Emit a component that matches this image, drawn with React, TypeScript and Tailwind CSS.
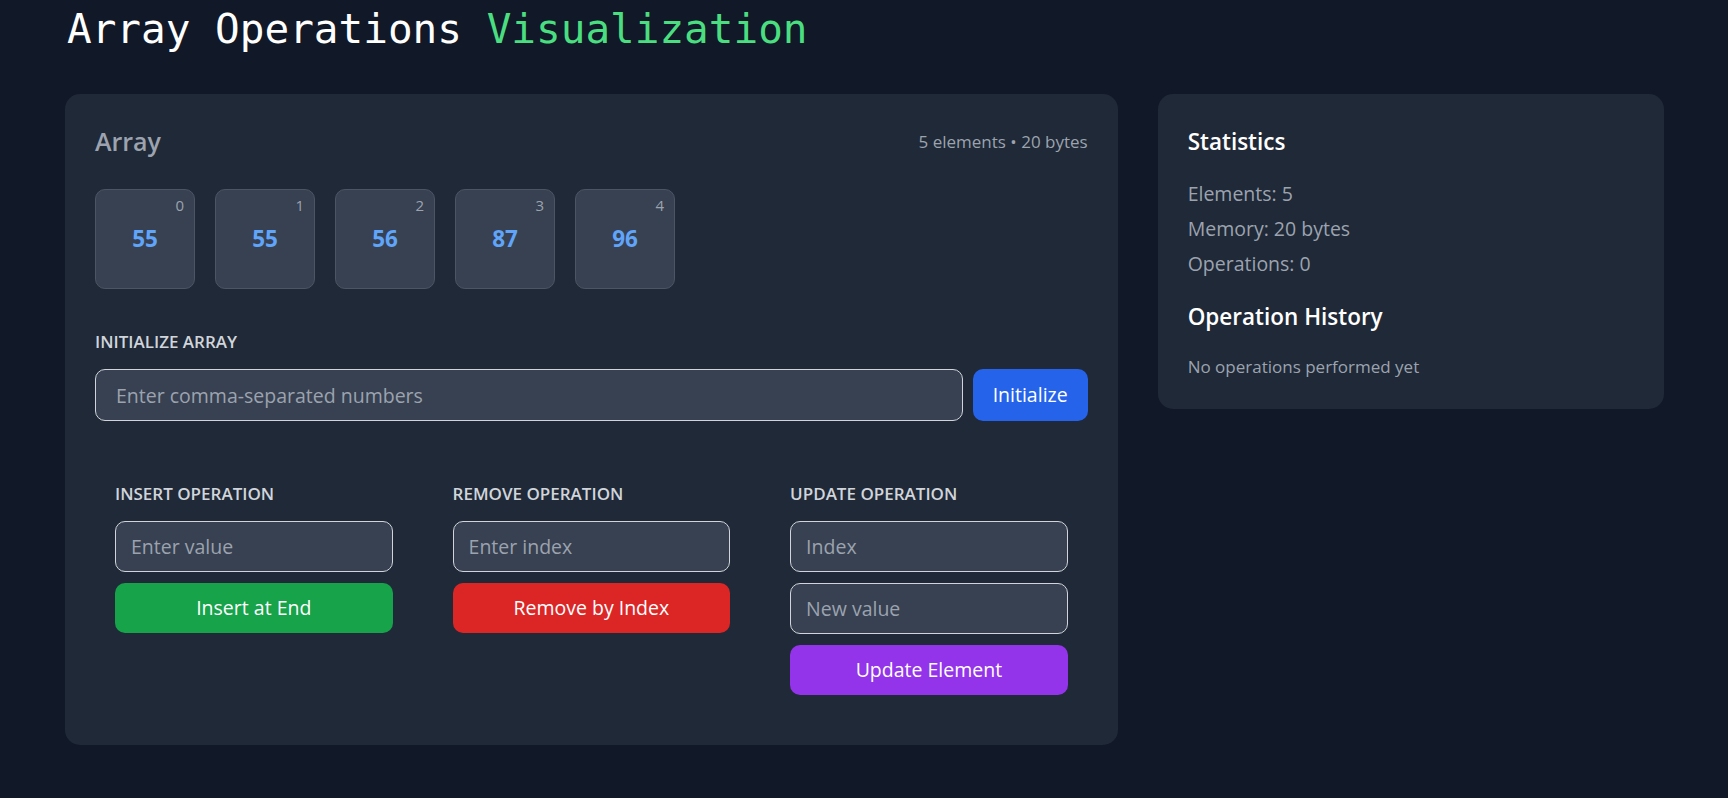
import { useState } from "react";

const sans = "font-['Open_Sans','Noto_Sans',sans-serif]";

type OpProps = {
    title: string;
    fields: string[];
    action: string;
    color: string;
};

const OperationBox = ({ title, fields, action, color }: OpProps) => {
    return (
        <div>
            <h3 className="text-[17px] leading-[25px] font-semibold uppercase text-[#d1d5db] mb-[15px]">{title}</h3>
            <div className="flex flex-col gap-[11px]">
                {fields.map((f) => (
                    <input
                        key={f}
                        placeholder={f}
                        className="h-[51px] w-full rounded-[10px] border border-[#d1d5db] bg-[#374151] px-[15px] text-[19.5px] text-white placeholder:text-[#9ca3af] outline-none"
                    />
                ))}
                <button className={`h-[50px] w-full rounded-[10px] text-[19.5px] text-white ${color}`}>{action}</button>
            </div>
        </div>
    );
};

export default function App() {
    const [arr] = useState<number[]>([55, 55, 56, 87, 96]);
    const [history] = useState<string[]>([]);

    return (
        <div className={`min-h-screen bg-[#111827] ${sans}`}>
            <div className="mx-auto max-w-[1600px] pt-[5px] pb-[40px] pl-[1px]">
                <h1 className="font-['DejaVu_Sans_Mono',monospace] text-[41px] leading-[48px] text-white mb-[41px] pl-[2px]">
                    Array Operations <span className="text-[#4ade80]">Visualization</span>
                </h1>

                <div className="grid grid-cols-3 items-start gap-[40px]">
                    <div className="col-span-2 rounded-[15px] bg-[#1f2937] p-[30px]">
                        <div className="flex items-center justify-between mb-[30px]">
                            <h2 className="text-[25px] leading-[35px] font-semibold text-[#9ca3af]">Array</h2>
                            <span className="text-[17px] leading-[25px] text-[#9ca3af]">
                                {arr.length} elements • {arr.length * 4} bytes
                            </span>
                        </div>

                        <div className="flex gap-[20px] mb-[40px]">
                            {arr.map((v, i) => (
                                <div
                                    key={i}
                                    className="relative flex h-[100px] w-[100px] items-center justify-center rounded-[10px] border border-[#4b5563] bg-[#374151]"
                                >
                                    <span className="absolute top-[5px] right-[10px] text-[15px] leading-[20px] text-[#9ca3af]">{i}</span>
                                    <span className="text-[22.5px] font-bold text-[#60a5fa]">{v}</span>
                                </div>
                            ))}
                        </div>

                        <h3 className="text-[17px] leading-[25px] font-semibold uppercase text-[#d1d5db] mb-[15px]">Initialize Array</h3>
                        <div className="flex gap-[10px]">
                            <input
                                placeholder="Enter comma-separated numbers"
                                className="h-[52px] flex-1 rounded-[10px] border border-[#d1d5db] bg-[#374151] px-[20px] text-[19.5px] text-white placeholder:text-[#9ca3af] outline-none"
                            />
                            <button className="h-[52px] rounded-[10px] bg-[#2563eb] px-[20px] text-[19.5px] text-white">Initialize</button>
                        </div>

                        <div className="mt-[40px] grid grid-cols-3 gap-[60px] p-[20px]">
                            <OperationBox title="Insert Operation" fields={["Enter value"]} action="Insert at End" color="bg-[#16a34a]" />
                            <OperationBox title="Remove Operation" fields={["Enter index"]} action="Remove by Index" color="bg-[#dc2626]" />
                            <OperationBox title="Update Operation" fields={["Index", "New value"]} action="Update Element" color="bg-[#9333ea]" />
                        </div>
                    </div>

                    <div className="rounded-[15px] bg-[#1f2937] p-[30px]">
                        <h2 className="text-[22.5px] leading-[35px] font-semibold text-white mb-[20px]">Statistics</h2>
                        <div className="flex flex-col gap-[5px] text-[19.5px] leading-[30px] text-[#9ca3af]">
                            <p>Elements: {arr.length}</p>
                            <p>Memory: {arr.length * 4} bytes</p>
                            <p>Operations: {history.length}</p>
                        </div>
                        <h2 className="text-[22.5px] leading-[35px] font-semibold text-white mt-[20px] mb-[20px]">Operation History</h2>
                        {history.length === 0 ? (
                            <p className="text-[17px] leading-[25px] text-[#9ca3af]">No operations performed yet</p>
                        ) : (
                            history.map((h, i) => <p key={i}>{h}</p>)
                        )}
                    </div>
                </div>
            </div>
        </div>
    );
}
